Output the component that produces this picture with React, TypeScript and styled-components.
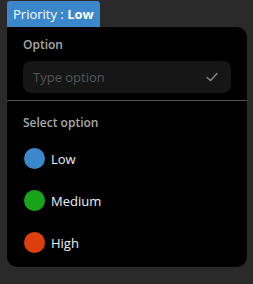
import * as React from 'react';
import styled, { createGlobalStyle } from 'styled-components';

const GlobalStyle = createGlobalStyle`
	html, body {
		margin: 0;
		padding: 0;
		background: #2a2a2a;
		font-family: "Open Sans", "Noto Sans", sans-serif;
	}
`;

const options = [
	{ label: 'Low', color: '#3a88c9' },
	{ label: 'Medium', color: '#18a31a' },
	{ label: 'High', color: '#dc3f0c' },
];

export default function App() {
	return (
		<>
			<GlobalStyle />
			<Page>
				<Badge>
					Priority : <b>Low</b>
				</Badge>
				<Panel>
					<Section $top={10}>
						<Label>Option</Label>
						<InputBox>
							<Input placeholder="Type option" />
							<svg width="14" height="14" viewBox="0 0 14 14" fill="none">
								<path d="M2 7.5 L5.5 10.5 L12 3.5" stroke="#8a8a8a" strokeWidth="1.4" strokeLinecap="round" strokeLinejoin="round" />
							</svg>
						</InputBox>
					</Section>
					<Divider />
					<Section $top={14}>
						<Label>Select option</Label>
						<OptionList>
							{options.map((o) => (
								<OptionRow key={o.label}>
									<Dot $color={o.color} />
									{o.label}
								</OptionRow>
							))}
						</OptionList>
					</Section>
				</Panel>
			</Page>
		</>
	);
}

const Page = styled.div`
	padding: 1px 6px 0 7px;
	display: flex;
	flex-direction: column;
	align-items: flex-start;
`;

const Badge = styled.div`
	background: #3a87cc;
	color: #fff;
	font-size: 13px;
	line-height: 26px;
	height: 26px;
	padding: 0 6px;
	border-radius: 3px 3px 0 0;
	white-space: pre;
	b {
		font-weight: 700;
	}
`;

const Panel = styled.div`
	width: 240px;
	height: 240px;
	background: #000;
	border-radius: 0 10px 10px 10px;
	display: flex;
	flex-direction: column;
`;

const Section = styled.div<{ $top: number }>`
	padding: ${(p) => p.$top}px 16px 0 16px;
	display: flex;
	flex-direction: column;
`;

const Label = styled.div`
	color: #a9a9a9;
	font-size: 12px;
	font-weight: 600;
	line-height: 16px;
`;

const InputBox = styled.div`
	margin-top: 8px;
	height: 32px;
	background: #161616;
	border-radius: 8px;
	display: flex;
	align-items: center;
	padding: 0 12px 0 10px;
	svg {
		flex: none;
	}
`;

const Input = styled.input`
	flex: 1;
	min-width: 0;
	background: transparent;
	border: 0;
	outline: none;
	color: #ddd;
	font-family: inherit;
	font-size: 13px;
	padding: 0;
	&::placeholder {
		color: #555;
	}
`;

const Divider = styled.div`
	margin-top: 7px;
	height: 1px;
	background: #555;
`;

const OptionList = styled.div`
	display: flex;
	flex-direction: column;
	gap: 21px;
	margin-top: 17px;
`;

const OptionRow = styled.div`
	display: flex;
	align-items: center;
	gap: 6px;
	color: #f0f0f0;
	font-size: 13px;
	font-weight: 500;
	height: 21px;
`;

const Dot = styled.span<{ $color: string }>`
	width: 21px;
	height: 21px;
	border-radius: 50%;
	background: ${(p) => p.$color};
	margin-left: 1px;
	flex: none;
`;
